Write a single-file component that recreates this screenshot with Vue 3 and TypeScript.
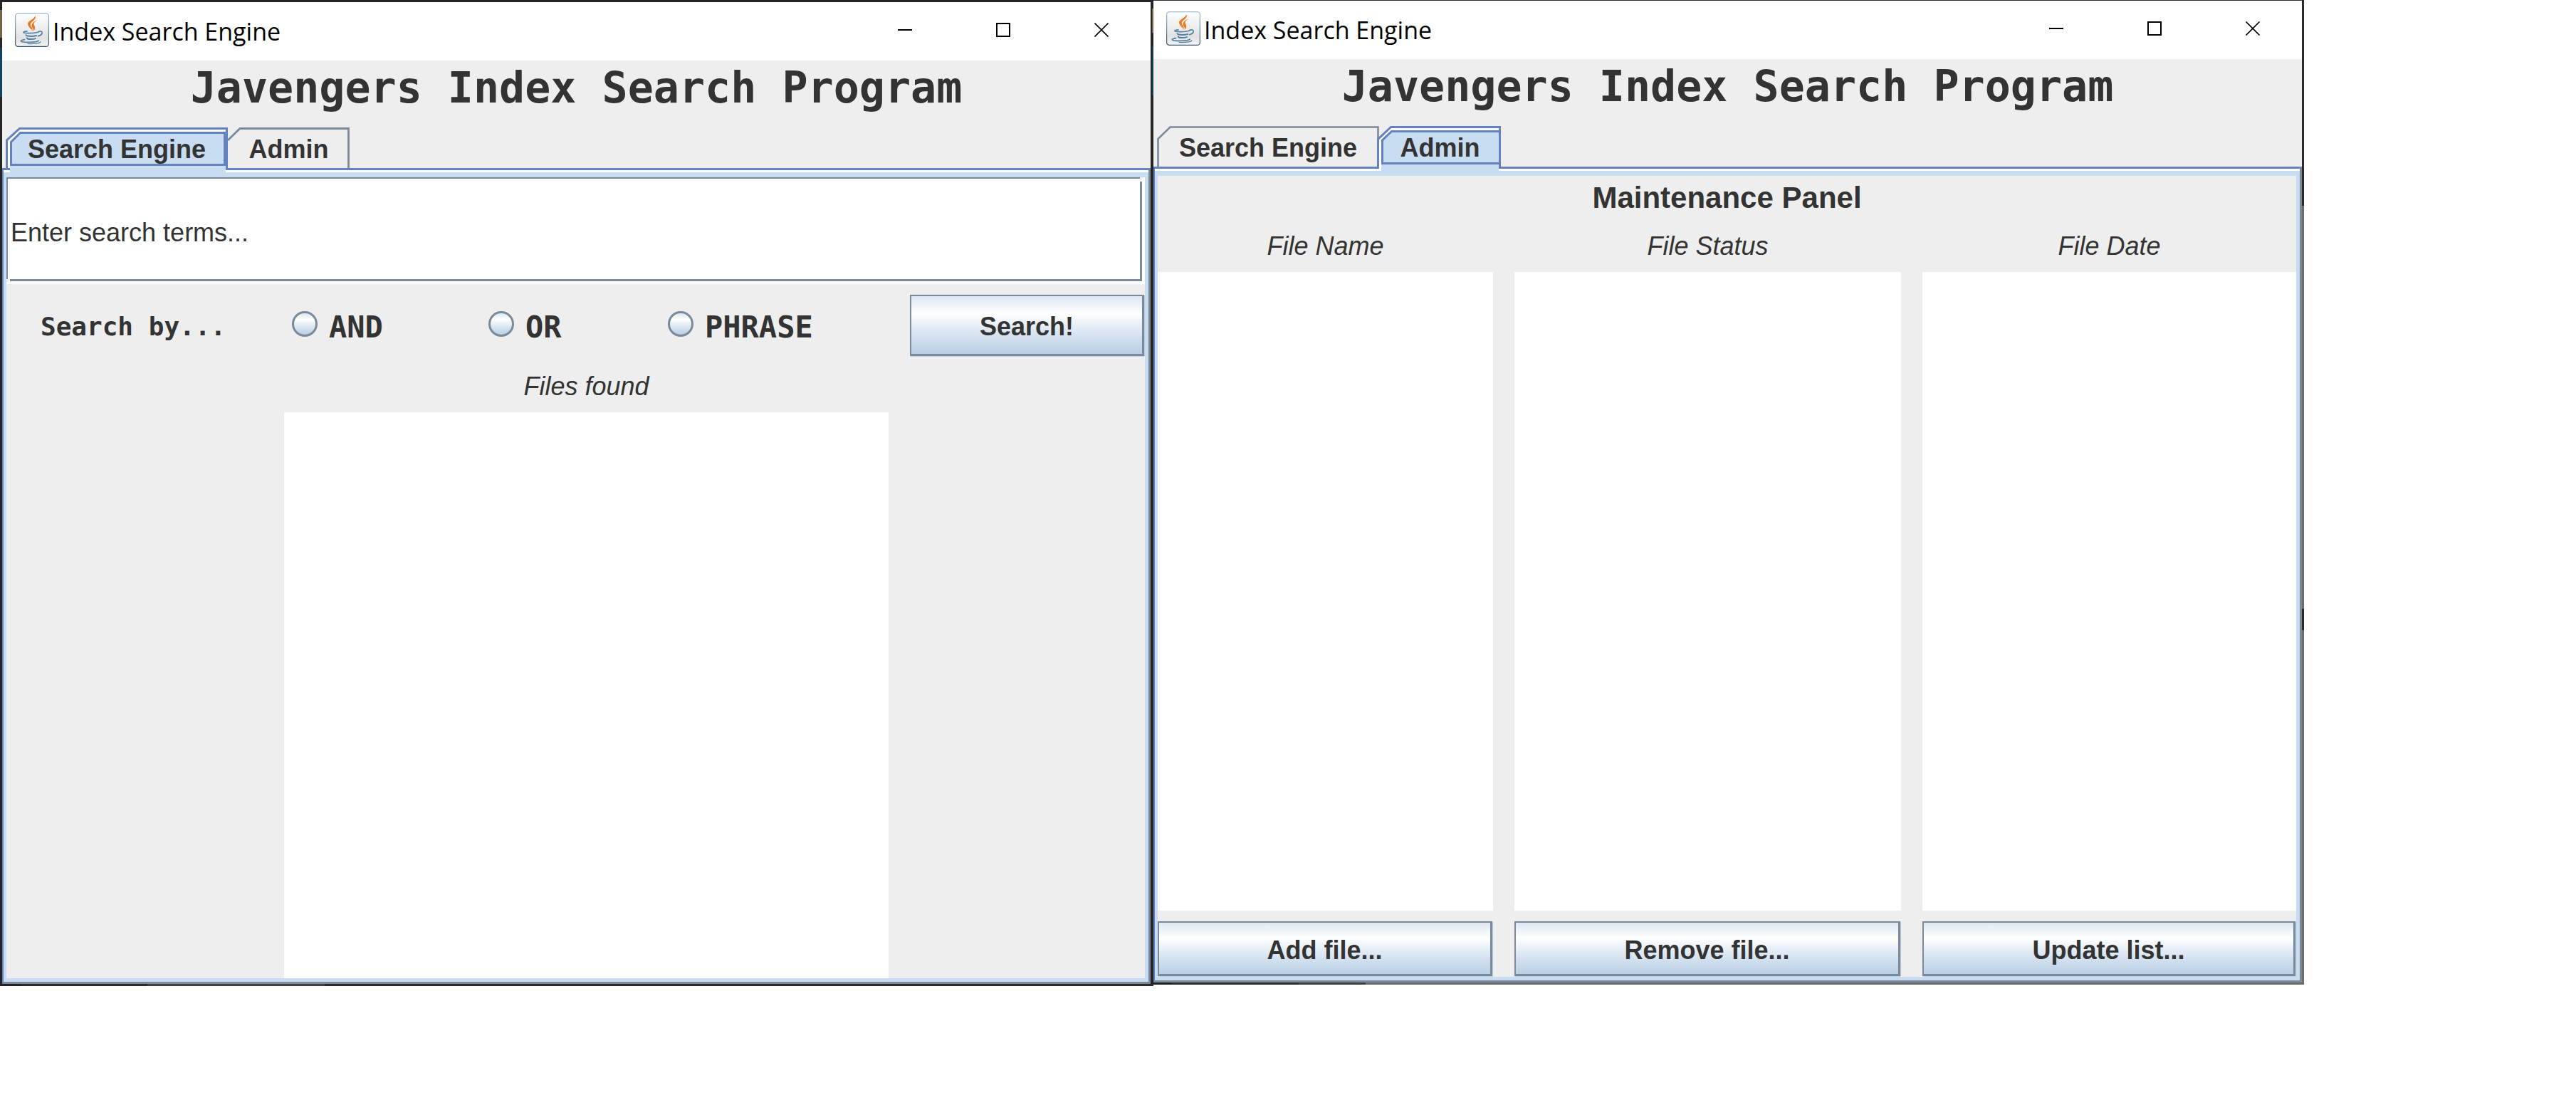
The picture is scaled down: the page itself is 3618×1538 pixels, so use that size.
<script setup lang="ts">
import { ref } from 'vue'

interface FileColumn {
  id: string
  heading: string
  action: string
}

const appTitle = 'Index Search Engine'
const heading = 'Javengers Index Search Program'
const query = ref('Enter search terms...')
const mode = ref('')
const modes: string[] = ['AND', 'OR', 'PHRASE']
const columns: FileColumn[] = [
  { id: 'name', heading: 'File Name', action: 'Add file...' },
  { id: 'status', heading: 'File Status', action: 'Remove file...' },
  { id: 'date', heading: 'File Date', action: 'Update list...' },
]
const windows = ['search', 'admin'] as const
</script>

<template>
  <main class="desktop">
    <section v-for="win in windows" :key="win" class="window" :class="win">
      <header class="titlebar">
        <svg class="java" viewBox="0 0 48 48" aria-hidden="true">
          <defs>
            <linearGradient :id="`edge-${win}`" x1="0" y1="0" x2="0" y2="1">
              <stop offset="0" stop-color="#a3bcd3" />
              <stop offset="1" stop-color="#34546c" />
            </linearGradient>
            <linearGradient :id="`face-${win}`" x1="0" y1="0" x2="0" y2="1">
              <stop offset="0" stop-color="#ffffff" />
              <stop offset="0.75" stop-color="#e2e2e2" />
              <stop offset="1" stop-color="#f4f4f4" />
            </linearGradient>
          </defs>
          <rect x="0.6" y="0.6" width="46.8" height="46.8" rx="4" :fill="`url(#face-${win})`" :stroke="`url(#edge-${win})`" stroke-width="1.2" />
          <g fill="#e97a1f">
            <path d="M28.4 4.2c1.400 3.400-.8 5.400-4.200 8.200-3.200 2.700-3.200 4.700-.4 8.200l1.600 4.800c-4.600-4-7.800-7.200-7.300-10.600.6-3.800 8.700-5.400 10.300-10.600z" />
            <path d="M32.600 10.200c-5.200 2-7 4.300-5.600 7.200 1.500 2.800 1.900 4.700-.6 8 .5-2.900-3.400-4.900-2.800-8.200.6-3.500 4.300-6 9-7z" />
          </g>
          <g fill="none" stroke="#5382a1" stroke-linecap="round">
            <path d="M17 25.800c-3.400.4-5.400 1.100-5.200 1.800.5 1.600 14.700 1.400 20.600-.3" stroke-width="1.700" />
            <path d="M33 26.400c3-1.300 5.400-.4 5.200 1.800-.2 2.300-2.700 3.800-5.600 4.500" stroke-width="1.700" />
            <path d="M15.500 31.200c.2 1.900 8.800 2.200 14.600.8" stroke-width="2" />
            <path d="M16.800 35.300c.7 2 7.600 2.400 12.200.8" stroke-width="2" />
            <path d="M13.500 37.600c-4 .7-5.800 1.700-4.900 2.500 2.500 2 21.600 1.700 24.600-1" stroke-width="1.700" />
            <path d="M18 43.300c6.500.7 16.300-.1 17.800-2.500" stroke-width="1.300" />
          </g>
        </svg>
        <span class="app-title">{{ appTitle }}</span>
        <div class="controls">
          <button type="button" aria-label="Minimize">
            <svg viewBox="0 0 20 20"><path d="M0 10h20" /></svg>
          </button>
          <button type="button" aria-label="Maximize">
            <svg viewBox="0 0 20 20"><path d="M1 1h18v18H1z" /></svg>
          </button>
          <button type="button" aria-label="Close">
            <svg viewBox="0 0 20 20"><path d="M.5.5l19 19M19.500.5l-19 19" stroke-width="1.600" /></svg>
          </button>
        </div>
      </header>

      <h1>{{ heading }}</h1>

      <nav class="tabs" role="tablist">
        <button type="button" role="tab" class="tab wide" :aria-selected="win === 'search'">
          <svg v-if="win === 'search'" class="frame" viewBox="0 0 312 63" aria-hidden="true">
            <path d="M6 63V20L20 6h289v57z" fill="#c8ddf2" />
            <path d="M4.500 57V19L20.500 4.500H308" fill="none" stroke="#fff" stroke-width="3" />
            <path d="M1.500 57V18L19.500 1.500H310.500V57" fill="none" stroke="#6382bf" stroke-width="3" />
            <path d="M7.500 52.500V20.500L20.500 7.500H307.500V52.500z" fill="none" stroke="#6382bf" stroke-width="3" />
          </svg>
          <svg v-else class="frame" viewBox="0 0 312 63" aria-hidden="true">
            <path d="M1.500 57V18L18.500 1.500H310.500V57" fill="none" stroke="#7a8a99" stroke-width="2.600" />
          </svg>
          <span>Search Engine</span>
        </button>
        <button type="button" role="tab" class="tab" :aria-selected="win === 'admin'">
          <svg v-if="win === 'admin'" class="frame" viewBox="0 0 171 63" aria-hidden="true">
            <path d="M3 63V20L17 6h151v57z" fill="#c8ddf2" />
            <path d="M1.500 60V19L16.500 4.500H168" fill="none" stroke="#fff" stroke-width="3" />
            <path d="M-1.500 57V18.500L16.500 1.500H169.500V57" fill="none" stroke="#6382bf" stroke-width="3" />
            <path d="M4.500 52.500V20L17.500 7.500H169.500V52.500z" fill="none" stroke="#6382bf" stroke-width="3" />
          </svg>
          <svg v-else class="frame" viewBox="0 0 171 63" aria-hidden="true">
            <path d="M0 18L17 1.500H169.500V57" fill="none" stroke="#7a8a99" stroke-width="2.800" />
          </svg>
          <span>Admin</span>
        </button>
      </nav>

      <div class="pane">
        <div v-if="win === 'search'" class="body">
          <div class="field">
            <input v-model="query" type="text" aria-label="Search terms" />
          </div>
          <form class="options" @submit.prevent>
            <span class="by">Search by...</span>
            <label v-for="m in modes" :key="m" class="mode">
              <input v-model="mode" type="radio" name="mode" :value="m" />
              <span>{{ m }}</span>
            </label>
            <button type="submit" class="metal go">Search!</button>
          </form>
          <div class="results">
            <div class="found">
              <label for="found">Files found</label>
              <textarea id="found" readonly></textarea>
            </div>
          </div>
        </div>

        <div v-else class="body">
          <h2>Maintenance Panel</h2>
          <div class="files">
            <div v-for="c in columns" :key="c.id" class="column">
              <label :for="`file-${c.id}`">{{ c.heading }}</label>
              <textarea :id="`file-${c.id}`" readonly></textarea>
              <button type="button" class="metal">{{ c.action }}</button>
            </div>
          </div>
        </div>
      </div>
    </section>
  </main>
</template>

<style>
body {
  margin: 0;
  background: #fff;
}
</style>

<style scoped>
* {
  box-sizing: border-box;
}
.desktop {
  display: grid;
  grid-template-columns: minmax(0, 1620fr) minmax(0, 1616fr) 382fr;
  align-items: start;
  color: #333;
  font-family: "Liberation Sans", Arial, sans-serif;
  font-size: 36px;
}
button,
input,
textarea {
  font: inherit;
  color: inherit;
  margin: 0;
  border: 0;
  outline: 0;
}
.window.search {
  padding: 3px 4px 3px 3px;
  background:
    linear-gradient(#26262600 12px, #736543 12px 46px, #262626 46px 65px, #12405f 65px 134px, #24242400 134px) right top / 2px 134px no-repeat,
    linear-gradient(#26262600 14px, #736543 14px 53px, #262626 53px 67px, #12405f 67px 136px, #24242400 136px) left top / 3px 136px no-repeat,
    linear-gradient(90deg, #222 30px, #2b2b2b 30px 207px, #404040 207px 456px, #2b2b2b 456px) left bottom / 100% 3px no-repeat,
    #242424;
}
.window.admin {
  padding: 1px 3px 3px 0;
  background:
    linear-gradient(90deg, #222 26px, #2e2e2e 26px 204px, #404040 204px 298px, #6b6b69 298px) left bottom / 100% 3px no-repeat,
    linear-gradient(#2a2a2a 289px, #6b6b6b 289px 855px, #2a2a2a 855px 885px, #6b6b6b 885px);
}
.titlebar {
  display: flex;
  align-items: center;
  height: 82px;
  padding: 0 0 4px 18px;
  background: #fff;
  color: #000;
}
.java {
  width: 48px;
  height: 48px;
}
.app-title {
  flex: 1;
  padding: 4px 0 0 5px;
  font-family: "Open Sans", "Noto Sans", sans-serif;
  font-size: 34px;
  line-height: 48px;
}
.controls {
  display: flex;
}
.controls button {
  display: flex;
  align-items: center;
  justify-content: center;
  width: 138px;
  height: 78px;
  padding: 0;
  background: none;
}
.controls svg {
  width: 20px;
  height: 20px;
  fill: none;
  stroke: #000;
  stroke-width: 2;
}
h1 {
  margin: 0;
  padding-bottom: 18px;
  background: #eee;
  font-family: "DejaVu Sans Mono", monospace;
  font-size: 60px;
  font-weight: 700;
  line-height: 76px;
  text-align: center;
}
.tabs {
  display: flex;
  height: 57px;
  padding-left: 5px;
  background: #eee;
}
.tab {
  position: relative;
  width: 171px;
  padding: 4px 0 0;
  background: none;
  font-weight: 700;
  text-align: center;
}
.tab.wide {
  width: 312px;
}
.frame {
  position: absolute;
  inset: 0 auto auto 0;
  width: 100%;
  height: 63px;
  overflow: visible;
}
.tab span {
  position: relative;
}
.pane {
  padding-top: 3px;
  border: 3px solid #7a8a99;
  border-top-color: #6382bf;
  border-left: 2px solid #6382bf;
  background: #fff;
}
.body {
  border: solid #c8ddf2;
  border-width: 7px 5px 5px 4px;
  background: #eee;
}
.field {
  position: relative;
  padding: 0 4px 4px 0;
  background: #fff;
}
.field input {
  display: block;
  width: 100%;
  height: 146px;
  padding: 10px 0 0 4px;
  border: solid #7a8a99;
  border-width: 2px 3px 3px 2px;
  background: #fff;
}
.field::before,
.field::after {
  content: "";
  position: absolute;
  width: 5px;
  height: 6px;
  background: linear-gradient(135deg, #eee 50%, #fff 50%);
}
.field::before {
  left: 0;
  bottom: 1px;
}
.field::after {
  right: 2px;
  top: 0;
}
.options {
  display: grid;
  grid-template-columns: 401fr 276fr 252fr 340fr 330fr;
  align-items: center;
  padding-top: 15px;
  font-family: "DejaVu Sans Mono", monospace;
  font-weight: 700;
}
.by {
  padding: 2px 0 0 48px;
  font-size: 36px;
}
.mode {
  display: flex;
  align-items: center;
  gap: 16px;
  font-size: 42px;
}
.mode input {
  appearance: none;
  width: 36px;
  height: 36px;
  margin-bottom: 5px;
  border: 3px solid #7a8a99;
  border-radius: 50%;
  background: linear-gradient(#dde8f3, #fff 30%, #dde8f3 60%, #b8cfe5);
}
.mode input:checked {
  background: radial-gradient(#333 40%, #dde8f3 45%);
}
.mode span {
  padding-top: 4px;
}
.metal {
  display: block;
  height: 77px;
  margin: 0 1px 1px 0;
  padding: 5px 0 0;
  border: solid #7a8a99;
  border-width: 2px 3px 3px 2px;
  background: linear-gradient(#dde8f3, #fff 30%, #dde8f3 60%, #b8cfe5);
  box-shadow: 1px 1px #b8cfe5;
  font-family: "Liberation Sans", Arial, sans-serif;
  font-size: 36px;
  font-weight: 700;
}
.go {
  height: 86px;
}
.results {
  display: grid;
  grid-template-columns: 390fr 849fr 360fr;
}
.found {
  grid-column: 2;
  display: flex;
  flex-direction: column;
}
.found label {
  padding: 21px 0 15px;
  font-style: italic;
  line-height: 42px;
  text-align: center;
}
textarea {
  display: block;
  padding: 4px;
  background: #fff;
  resize: none;
}
.found textarea {
  height: 795px;
}
h2 {
  margin: 0;
  font-size: 42px;
  font-weight: 700;
  line-height: 62px;
  text-align: center;
}
.files {
  display: grid;
  grid-template-columns: 471fr 543fr 525fr;
  column-gap: 30px;
}
.column {
  display: flex;
  flex-direction: column;
}
.column label {
  font-style: italic;
  line-height: 73px;
  text-align: center;
}
.column textarea {
  height: 897px;
  margin-bottom: 15px;
}
</style>
